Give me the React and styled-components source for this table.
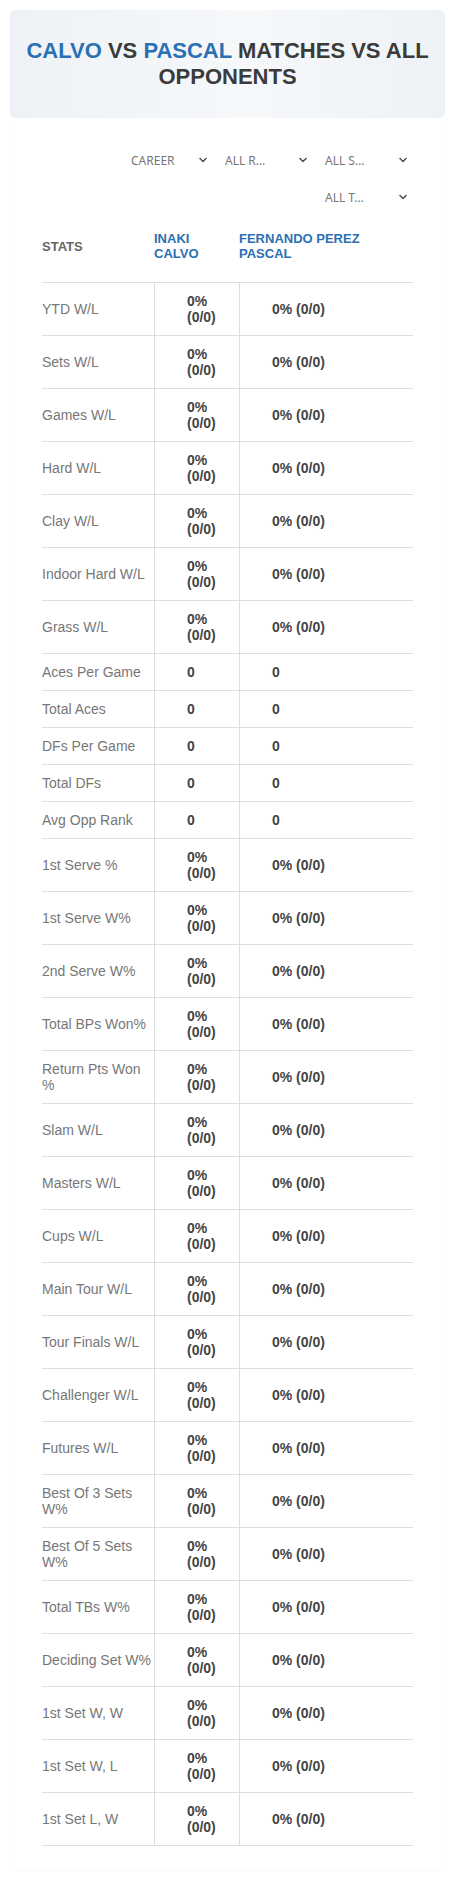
import React from "react";
import styled, { createGlobalStyle } from "styled-components";
import { ChevronDown } from "lucide-react";

const pct = "0% (0/0)";

const rows = [
  ["YTD W/L", pct],
  ["Sets W/L", pct],
  ["Games W/L", pct],
  ["Hard W/L", pct],
  ["Clay W/L", pct],
  ["Indoor Hard W/L", pct],
  ["Grass W/L", pct],
  ["Aces Per Game", "0"],
  ["Total Aces", "0"],
  ["DFs Per Game", "0"],
  ["Total DFs", "0"],
  ["Avg Opp Rank", "0"],
  ["1st Serve %", pct],
  ["1st Serve W%", pct],
  ["2nd Serve W%", pct],
  ["Total BPs Won%", pct],
  ["Return Pts Won %", pct],
  ["Slam W/L", pct],
  ["Masters W/L", pct],
  ["Cups W/L", pct],
  ["Main Tour W/L", pct],
  ["Tour Finals W/L", pct],
  ["Challenger W/L", pct],
  ["Futures W/L", pct],
  ["Best Of 3 Sets W%", pct],
  ["Best Of 5 Sets W%", pct],
  ["Total TBs W%", pct],
  ["Deciding Set W%", pct],
  ["1st Set W, W", pct],
  ["1st Set W, L", pct],
  ["1st Set L, W", pct],
];

const filters = [
  { label: "CAREER", width: 86 },
  { label: "ALL R…", width: 92 },
  { label: "ALL S…", width: 92 },
  { label: "ALL T…", width: 92 },
];

function App() {
  return (
    <>
      <GlobalStyle />
      <Page>
        <Card>
          <TitleBox>
            <Title>
              <Blue>CALVO</Blue> VS <Blue>PASCAL</Blue> MATCHES VS ALL OPPONENTS
            </Title>
          </TitleBox>

          <Content>
            <Filters>
              {filters.map((f) => (
                <Select key={f.label} $width={f.width}>
                  <span>{f.label}</span>
                  <ChevronDown size={12} strokeWidth={3.2} />
                </Select>
              ))}
            </Filters>

            <HeadRow>
              <HeadCell>STATS</HeadCell>
              <HeadCell $player>INAKI CALVO</HeadCell>
              <HeadCell $player>FERNANDO PEREZ PASCAL</HeadCell>
            </HeadRow>

            {rows.map(([label, value]) => (
              <Row key={label}>
                <Label>{label}</Label>
                <Value>{value}</Value>
                <Value>{value}</Value>
              </Row>
            ))}
          </Content>
        </Card>
      </Page>
    </>
  );
}

const GlobalStyle = createGlobalStyle`
  body {
    margin: 0;
    background: #fff;
    font-family: "Liberation Sans", Arial, sans-serif;
  }
`;

const Page = styled.div`
  padding: 10px;
`;

const Card = styled.div`
  background: #fff;
  border-radius: 6px;
  box-shadow: 0 1px 2px rgba(0, 0, 0, 0.04);
`;

const TitleBox = styled.div`
  background: linear-gradient(90deg, #eef2f6 0%, #f6f8fa 55%, #eef2f6 100%);
  border-radius: 6px;
  padding: 28px 12px;
  text-align: center;
`;

const Title = styled.h1`
  margin: 0;
  font-size: 22px;
  line-height: 26px;
  font-weight: 700;
  color: #3b3b3b;
`;

const Blue = styled.span`
  color: #2b70b3;
`;

const Content = styled.div`
  padding: 28px 32px 24px;
`;

const Filters = styled.div`
  display: flex;
  flex-wrap: wrap;
  justify-content: flex-end;
  column-gap: 8px;
  row-gap: 9px;
  padding-left: 60px;
`;

const Select = styled.div`
  width: ${(p) => p.$width}px;
  height: 28px;
  box-sizing: border-box;
  padding: 0 4px;
  display: flex;
  align-items: center;
  justify-content: space-between;
  font-family: "Noto Sans", "Open Sans", sans-serif;
  font-size: 12px;
  color: #777;

  svg {
    color: #555;
  }
`;

const Grid = styled.div`
  display: grid;
  grid-template-columns: 112px 85px 1fr;
`;

const HeadRow = styled(Grid)`
  border-bottom: 1px solid #dcdfe2;
`;

const HeadCell = styled.div`
  padding: 20px 0 21px;
  display: flex;
  align-items: center;
  font-size: 13px;
  line-height: 15px;
  font-weight: 700;
  color: ${(p) => (p.$player ? "#2b70b3" : "#666")};
  padding-right: ${(p) => (p.$player ? "4px" : "0")};
`;

const Row = styled(Grid)`
  border-bottom: 1px solid #dcdfe2;
`;

const Label = styled.div`
  padding: 10px 0;
  display: flex;
  align-items: center;
  font-size: 14px;
  line-height: 16px;
  color: #777;
`;

const Value = styled.div`
  padding: 10px 4px 10px 32px;
  border-left: 1px solid #dcdfe2;
  display: flex;
  align-items: center;
  font-size: 14px;
  line-height: 16px;
  font-weight: 700;
  color: #444;
`;

export default App;
